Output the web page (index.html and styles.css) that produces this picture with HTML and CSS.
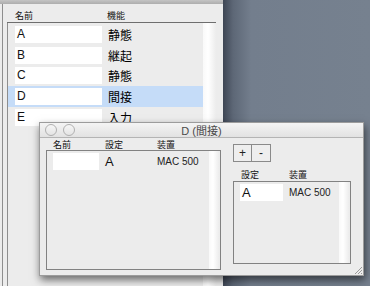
FILE: index.html
```html
<!DOCTYPE html>
<html lang="ja">
<head>
    <meta charset="UTF-8">
    <title>照明</title>
    <link rel="stylesheet" href="styles.css">
</head>
<body>
    <div class="screen">
        <!-- Main window (function list) -->
        <div class="main-win">
            <div class="main-toolbar"></div>
            <div class="main-body">
                <div class="list">
                    <div class="list-head">
                        <span class="head-name">名前</span>
                        <span>機能</span>
                    </div>
                    <div class="list-rows">
                        <div class="rows">
                            <div class="row"><span class="cell">A</span><span class="func">静態</span></div>
                            <div class="row"><span class="cell">B</span><span class="func">継起</span></div>
                            <div class="row"><span class="cell">C</span><span class="func">静態</span></div>
                            <div class="row selected"><span class="cell">D</span><span class="func">間接</span></div>
                            <div class="row"><span class="cell">E</span><span class="func">入力</span></div>
                        </div>
                        <div class="scroll-col"></div>
                    </div>
                </div>
            </div>
        </div>
        <div class="desk"></div>

        <!-- Detail window -->
        <div class="dwin">
            <div class="titlebar">
                <span class="light"></span>
                <span class="light"></span>
                <span class="title">D (間接)</span>
            </div>
            <div class="dwin-body">
                <div class="left-panel">
                    <div class="panel-head">
                        <span class="ph-name">名前</span>
                        <span class="ph-set">設定</span>
                        <span>装置</span>
                    </div>
                    <div class="box left-box">
                        <div class="box-rows">
                            <div class="drow">
                                <span class="dcell name-cell"></span>
                                <span class="dset">A</span>
                                <span class="ddev">MAC 500</span>
                            </div>
                        </div>
                        <div class="scroll-col"></div>
                    </div>
                </div>
                <div class="right-panel">
                    <div class="buttons">
                        <button class="btn">+</button>
                        <button class="btn">-</button>
                    </div>
                    <div class="panel-head right-head">
                        <span class="rh-set">設定</span>
                        <span>装置</span>
                    </div>
                    <div class="box right-box">
                        <div class="box-rows">
                            <div class="drow">
                                <span class="dcell set-cell">A</span>
                                <span class="ddev">MAC 500</span>
                            </div>
                        </div>
                        <div class="scroll-col"></div>
                    </div>
                </div>
            </div>
            <svg class="grip" width="8" height="8" viewBox="0 0 8 8">
                <path d="M1 8 L8 1 M4 8 L8 4 M7 8 L8 7" stroke="#9a9a9a" stroke-width="1"/>
            </svg>
        </div>
    </div>
</body>
</html>
```

FILE: styles.css
```css
body {
    margin: 0;
    padding: 0;
    font-family: 'Liberation Sans', 'Noto Sans CJK JP', sans-serif;
    color: #111;
}

.screen {
    position: relative;
    width: 370px;
    height: 286px;
    display: flex;
    overflow: hidden;
    background-color: #747f8e;
}

/* Main window */
.main-win {
    width: 223px;
    height: 286px;
    background-color: #ececec;
    display: flex;
    flex-direction: column;
}

.main-toolbar {
    height: 4px;
    background: linear-gradient(#c4c4c4, #adadad);
}

.main-body {
    flex: 1;
    margin-left: 2px;
    border-left: 1px solid #8e8e8e;
    padding-left: 4px;
    display: flex;
}

.list {
    width: 209px;
    display: flex;
    flex-direction: column;
}

.list-head {
    height: 14px;
    padding-top: 4px;
    border-bottom: 1px solid #6e6e6e;
    display: flex;
    align-items: center;
    padding-left: 8px;
    font-size: 9px;
    color: #111;
}

.head-name {
    width: 92px;
}

.list-rows {
    flex: 1;
    border-left: 1px solid #8e8e8e;
    display: flex;
}

.rows {
    flex: 1;
    padding-top: 1px;
}

.row {
    height: 20.7px;
    display: flex;
    align-items: center;
    padding-left: 7px;
    font-size: 12px;
}

.row.selected {
    background-color: #c5dcf8;
}

.cell {
    width: 87px;
    height: 17px;
    line-height: 17px;
    background-color: #fff;
    padding-left: 2px;
    box-sizing: border-box;
}

.func {
    margin-left: 6px;
    color: #000;
}

.scroll-col {
    width: 13px;
    background: linear-gradient(to right, #f9f9f9, #ffffff 40%, #ececec);
}

.desk {
    flex: 1;
    background: linear-gradient(to right, #3e4654, #5d6776 10px, #737e8d 28px, #76818f);
}

/* Detail window */
.dwin {
    position: absolute;
    left: 39px;
    top: 122px;
    width: 325px;
    height: 154px;
    box-sizing: border-box;
    border: 1px solid #9c9c9c;
    background-color: #ececec;
    box-shadow: 1px 4px 8px rgba(0, 0, 0, 0.55);
    display: flex;
    flex-direction: column;
}

.titlebar {
    position: relative;
    height: 14px;
    border-bottom: 1px solid #b4b4b4;
    background: linear-gradient(#f4f4f4, #e2e2e2);
    display: flex;
    align-items: center;
    padding-left: 5px;
    gap: 6px;
}

.light {
    width: 10px;
    height: 10px;
    border-radius: 50%;
    border: 1px solid #b0b0b0;
    background: linear-gradient(#f6f6f6, #e4e4e4);
}

.title {
    position: absolute;
    left: 0;
    right: 0;
    text-align: center;
    font-size: 11px;
    color: #4a4a4a;
}

.dwin-body {
    flex: 1;
    display: flex;
    padding-left: 6px;
    gap: 12px;
}

.panel-head {
    height: 12px;
    display: flex;
    align-items: center;
    font-size: 9px;
    color: #111;
}

.left-panel .panel-head {
    padding-left: 7px;
}

.ph-name, .ph-set {
    width: 52px;
}

.box {
    box-sizing: border-box;
    border: 1px solid #828282;
    display: flex;
}

.left-box {
    width: 175px;
    height: 120px;
}

.box-rows {
    flex: 1;
    padding: 2px 0 0 6px;
}

.box .scroll-col {
    width: 10px;
    margin-right: 1px;
}

.drow {
    height: 17px;
    display: flex;
    align-items: center;
}

.dcell {
    height: 17px;
    line-height: 17px;
    background-color: #fff;
    box-sizing: border-box;
}

.name-cell {
    width: 46px;
}

.dset {
    margin-left: 6px;
    width: 52px;
    font-size: 13px;
}

.ddev {
    font-size: 10px;
    color: #222;
}

.right-panel {
    width: 118px;
    padding-top: 6px;
    display: flex;
    flex-direction: column;
}

.buttons {
    display: flex;
}

.btn {
    width: 19px;
    height: 18px;
    margin: 0;
    padding: 0;
    border: 1px solid #8a8a8a;
    background-color: #eeeeee;
    font-family: 'Liberation Sans', sans-serif;
    font-size: 12px;
    color: #222;
    line-height: 14px;
}

.btn + .btn {
    border-left: none;
}

.right-head {
    margin-top: 6px;
    height: 13px;
    padding-left: 8px;
}

.rh-set {
    width: 48px;
}

.right-box {
    width: 118px;
    height: 83px;
}

.set-cell {
    width: 43px;
    padding-left: 2px;
    font-size: 13px;
    margin-right: 6px;
}

.grip {
    position: absolute;
    right: 1px;
    bottom: 1px;
}
```
